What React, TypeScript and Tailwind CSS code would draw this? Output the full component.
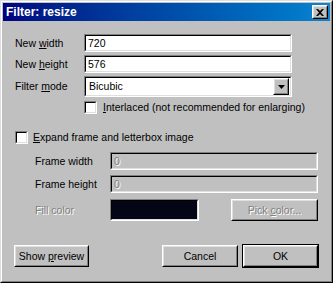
import React from "react";

const FONT = "font-['Liberation_Sans',Arial,sans-serif]";
const DISABLED = "text-[#808080] [text-shadow:1px_1px_0_#ffffff]";

function Sunken({ className = "", inner = "", children }: { className?: string; inner?: string; children?: React.ReactNode }) {
  return (
    <div className={`border border-t-[#808080] border-l-[#808080] border-b-white border-r-white ${className}`}>
      <div className={`h-full w-full border border-t-black border-l-black border-b-[#dfdfdf] border-r-[#dfdfdf] ${inner}`}>
        {children}
      </div>
    </div>
  );
}

function Raised({ className = "", inner = "", children }: { className?: string; inner?: string; children?: React.ReactNode }) {
  return (
    <div className={`border border-t-white border-l-white border-b-black border-r-black bg-[#c0c0c0] ${className}`}>
      <div className={`h-full w-full border border-t-[#dfdfdf] border-l-[#dfdfdf] border-b-[#808080] border-r-[#808080] flex items-center justify-center ${inner}`}>
        {children}
      </div>
    </div>
  );
}

function Checkbox() {
  return <Sunken className="w-[13px] h-[13px] shrink-0" inner="bg-white" />;
}

function EditRow({ label, value, disabled }: { label: React.ReactNode; value: string; disabled?: boolean }) {
  return (
    <div className="flex items-center h-[18px]">
      <span className="w-[69px]">{label}</span>
      <Sunken className="w-[208px] h-[18px]" inner={`${disabled ? "bg-[#c0c0c0]" : "bg-white"} flex items-center pl-[2px]`}>
        <span className={disabled ? DISABLED : ""}>{value}</span>
      </Sunken>
    </div>
  );
}

export default function App() {
  return (
    <div className={`w-[333px] h-[283px] bg-[#c0c0c0] text-[10.5px] leading-none text-black ${FONT}`}>
      <div className="h-full border border-t-[#dfdfdf] border-l-[#dfdfdf] border-b-black border-r-black">
        <div className="h-full border border-t-white border-l-white border-b-[#808080] border-r-[#808080] p-px flex flex-col">
          {/* Title bar */}
          <div className="h-[18px] shrink-0 bg-gradient-to-r from-[#000080] to-[#1084d0] flex items-center justify-between pl-[3px] pr-[2px]">
            <span className="text-white font-bold text-[12px]">Filter: resize</span>
            <Raised className="w-[16px] h-[14px]" inner="">
              <svg width="8" height="7" viewBox="0 0 8 7">
                <path d="M0 0h2l2 2 2-2h2L5 3.5 8 7H6L4 5 2 7H0l3-3.5z" fill="#000" />
              </svg>
            </Raised>
          </div>

          {/* Body */}
          <div className="flex flex-col pl-[12px]">
            <div className="mt-[13px]">
              <EditRow label={<>New <u className="underline-offset-1">w</u>idth</>} value="720" />
            </div>
            <div className="mt-[3px]">
              <EditRow label={<>New <u className="underline-offset-1">h</u>eight</>} value="576" />
            </div>
            <div className="mt-[3px] flex items-center h-[21px]">
              <span className="w-[69px]">Filter <u className="underline-offset-1">m</u>ode</span>
              <Sunken className="w-[208px] h-[21px]" inner="bg-white flex items-center justify-between pl-[3px] pr-px">
                <span>Bicubic</span>
                <Raised className="w-[16px] h-[17px]">
                  <svg width="7" height="4" viewBox="0 0 7 4">
                    <path d="M0 0h7L3.5 4z" fill="#000" />
                  </svg>
                </Raised>
              </Sunken>
            </div>
            <div className="mt-[4px] ml-[69px] flex items-center gap-[6px]">
              <Checkbox />
              <span><u className="underline-offset-1">I</u>nterlaced (not recommended for enlarging)</span>
            </div>

            <div className="mt-[17px] flex items-center gap-[5px]">
              <Checkbox />
              <span><u className="underline-offset-1">E</u>xpand frame and letterbox image</span>
            </div>
            <div className="mt-[8px] ml-[20px] flex items-center h-[18px]">
              <span className="w-[75px]">Frame width</span>
              <Sunken className="w-[208px] h-[18px]" inner="bg-[#c0c0c0] flex items-center pl-[2px]">
                <span className={DISABLED}>0</span>
              </Sunken>
            </div>
            <div className="mt-[5px] ml-[20px] flex items-center h-[18px]">
              <span className="w-[75px]">Frame height</span>
              <Sunken className="w-[208px] h-[18px]" inner="bg-[#c0c0c0] flex items-center pl-[2px]">
                <span className={DISABLED}>0</span>
              </Sunken>
            </div>
            <div className="mt-[6px] ml-[20px] flex items-center h-[22px]">
              <span className={`w-[75px] ${DISABLED}`}>Fill color</span>
              <Sunken className="w-[89px] h-[22px]" inner="bg-[#050518]" />
              <Raised className="ml-[32px] w-[87px] h-[22px]">
                <span className={DISABLED}>Pick <u className="underline-offset-1">c</u>olor...</span>
              </Raised>
            </div>

            <div className="mt-[24px] -ml-px flex items-center h-[22px]">
              <Raised className="w-[75px] h-[22px]">
                <span>Show <u className="underline-offset-1">p</u>review</span>
              </Raised>
              <Raised className="ml-[73px] w-[76px] h-[22px]">
                <span>Cancel</span>
              </Raised>
              <div className="ml-[4px] border border-black">
                <Raised className="w-[75px] h-[22px]">
                  <span>OK</span>
                </Raised>
              </div>
            </div>
          </div>
        </div>
      </div>
    </div>
  );
}
